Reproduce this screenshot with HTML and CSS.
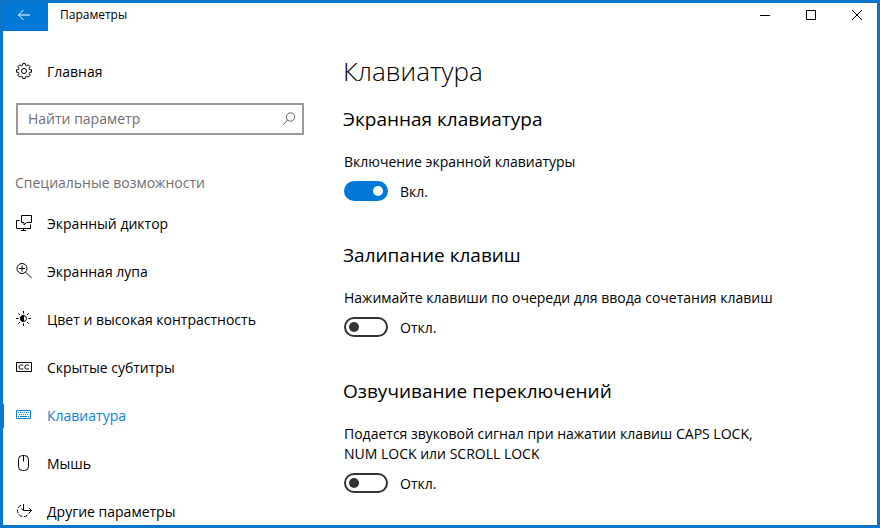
FILE: index.html
```html
<!DOCTYPE html>
<html lang="ru">
<head>
  <meta charset="UTF-8">
  <title>Параметры</title>
  <meta name="viewport" content="width=device-width, initial-scale=1.0">
  <link rel="stylesheet" href="styles.css">
</head>
<body>
  <div class="window">
    <header class="titlebar">
      <button class="back-btn" aria-label="Назад">
        <svg width="14" height="12" viewBox="0 0 14 12"><path d="M13 6H1.500M6.500 1L1.500 6l5 5"/></svg>
      </button>
      <div class="window-title">Параметры</div>
      <button class="window-btn" aria-label="Свернуть">
        <svg width="12" height="12" viewBox="0 0 12 12"><path d="M1 6.500h10"/></svg>
      </button>
      <button class="window-btn" aria-label="Развернуть">
        <svg width="12" height="12" viewBox="0 0 12 12"><path d="M1.500 1.500h9v9h-9z"/></svg>
      </button>
      <button class="window-btn" aria-label="Закрыть">
        <svg width="12" height="12" viewBox="0 0 12 12"><path d="M1 1l10 10M11 1L1 11"/></svg>
      </button>
    </header>
    <div class="content">
      <aside class="sidebar">
        <a href="#" class="nav-item">
          <svg class="icon" viewBox="0 0 16 16"><circle cx="8" cy="8" r="2.500"/><path d="M6.500 2.300L6.800.5h2.400l.3 1.800 1.200.5L12.200 1.800l2 2-1.100 1.500.5 1.200 1.900.3v2.400l-1.900.3-.5 1.200 1.100 1.500-2 2-1.500-1.100-1.200.5-.3 1.900H6.800l-.3-1.900-1.200-.5-1.500 1.100-2-2 1.100-1.500-.5-1.200-1.900-.3V6.800l1.900-.3.5-1.200-1.100-1.500 2-2 1.500 1z"/></svg>
          Главная
        </a>
        <div class="search">
          <input type="text" class="search-input" placeholder="Найти параметр" aria-label="Найти параметр">
          <svg class="search-icon" width="14" height="14" viewBox="0 0 14 14"><circle cx="8.500" cy="5" r="4.200"/><path d="M5.500 8L1 13"/></svg>
        </div>
        <div class="section-name">Специальные возможности</div>
        <nav>
          <a href="#" class="nav-item">
            <svg class="icon" viewBox="0 0 16 16"><path d="M5.500.5h10v7h-5l-2.500 2.500v-2.500H5.500zM3.500 5.500h-3v8h14v-4M7.500 13.500v2M5 15.500h5"/></svg>
            Экранный диктор
          </a>
          <a href="#" class="nav-item">
            <svg class="icon" viewBox="0 0 16 16"><circle cx="6" cy="5.500" r="5"/><path d="M3 5.500h6M6 2.500v6M9.600 9.100l6 6"/></svg>
            Экранная лупа
          </a>
          <a href="#" class="nav-item">
            <svg class="icon" viewBox="0 0 16 16"><circle cx="7.500" cy="7.500" r="3"/><path class="fill" d="M7.500 4.500a3 3 0 0 0 0 6z"/><path d="M7.500 0v2.500M7.500 12.500V15M0 7.500h2.500M12.500 7.500H15M2.300 2.300L4 4M11 11l1.700 1.700M2.300 12.700L4 11M11 4l1.700-1.700"/></svg>
            Цвет и высокая контрастность
          </a>
          <a href="#" class="nav-item">
            <svg class="icon" viewBox="0 0 16 16"><path d="M.5 3.500h15v9H.5zM7.200 6.400C5.500 5.300 3 5.700 3 8s2.500 2.700 4.200 1.600M13 6.400c-1.700-1.100-4.200-.7-4.200 1.600s2.500 2.700 4.200 1.600"/></svg>
            Скрытые субтитры
          </a>
          <a href="#" class="nav-item active">
            <svg class="icon" viewBox="0 0 16 16"><path d="M.5 3.500h14v8H.5zM4 9.500h7"/><path stroke-dasharray="1 1" d="M2 5.500h11M3 7.500h10M2 9.500h1M12 9.500h1"/></svg>
            Клавиатура
          </a>
          <a href="#" class="nav-item">
            <svg class="icon" viewBox="0 0 16 16"><rect x="2.500" y=".5" width="10" height="15" rx="4"/><path d="M7.500 1v5.500"/></svg>
            Мышь
          </a>
          <a href="#" class="nav-item">
            <svg class="icon" viewBox="0 0 16 16"><path stroke-dasharray="4 1.500" d="M5 2.200A6 6 0 1 0 13 10"/><path d="M7.500 1v6.500h8M5.500 5.500l2 2M13 5l2.500 2.500L13 10"/></svg>
            Другие параметры
          </a>
        </nav>
      </aside>
      <main class="main">
        <h1>Клавиатура</h1>
        <section class="setting">
          <h2>Экранная клавиатура</h2>
          <label class="setting-label" for="screenKeyboard">Включение экранной клавиатуры</label>
          <div class="toggle-row">
            <input type="checkbox" class="toggle" id="screenKeyboard" checked>
            <span>Вкл.</span>
          </div>
        </section>
        <section class="setting">
          <h2>Залипание клавиш</h2>
          <label class="setting-label" for="stickyKeys">Нажимайте клавиши по очереди для ввода сочетания клавиш</label>
          <div class="toggle-row">
            <input type="checkbox" class="toggle" id="stickyKeys">
            <span>Откл.</span>
          </div>
        </section>
        <section class="setting">
          <h2>Озвучивание переключений</h2>
          <label class="setting-label" for="toggleKeys">Подается звуковой сигнал при нажатии клавиш CAPS LOCK, NUM LOCK или SCROLL LOCK</label>
          <div class="toggle-row">
            <input type="checkbox" class="toggle" id="toggleKeys">
            <span>Откл.</span>
          </div>
        </section>
      </main>
    </div>
  </div>
</body>
</html>
```
FILE: styles.css
```css
* {
  box-sizing: border-box;
}
body {
  margin: 0;
  font-family: 'Segoe UI', 'Open Sans', 'Noto Sans', sans-serif;
  font-size: 14px;
  line-height: 20px;
  color: #000;
}
.window {
  height: 100vh;
  display: flex;
  flex-direction: column;
  background: #fff;
  border: 3px solid #0a75c9;
  overflow: hidden;
}
.titlebar {
  display: flex;
  height: 28px;
  flex-shrink: 0;
}
svg {
  fill: none;
  stroke: currentColor;
}
.back-btn, .window-btn {
  display: flex;
  align-items: center;
  justify-content: center;
  padding: 0;
  border: none;
  background: none;
  color: #000;
}
.back-btn {
  width: 45px;
  padding: 0 4px 4px 0;
  background: #0078d7;
  color: #fff;
}
.window-btn {
  width: 46px;
  padding: 0 0 4px 6px;
}
.window-title {
  flex: 1;
  padding-left: 12px;
  font-size: 12px;
  line-height: 24px;
}
.content {
  flex: 1;
  display: flex;
  min-height: 0;
}
.sidebar {
  width: 301px;
  flex-shrink: 0;
  padding-top: 17px;
}
.nav-item {
  position: relative;
  display: flex;
  align-items: center;
  gap: 15px;
  height: 48px;
  padding-left: 13px;
  color: #000;
  text-decoration: none;
}
.icon {
  width: 16px;
  height: 16px;
  margin-bottom: 2px;
}
.fill {
  fill: currentColor;
}
.nav-item.active {
  color: #0a84d0;
}
.nav-item.active::before {
  content: "";
  position: absolute;
  left: 0;
  width: 1px;
  height: 24px;
  background: #0078d7;
}
.search {
  display: flex;
  align-items: center;
  height: 32px;
  margin: 7px 0 0 13px;
  padding: 0 6px 0 10px;
  border: 2px solid #999;
  color: #666;
}
.search-input {
  flex: 1;
  min-width: 0;
  padding: 0;
  border: none;
  outline: none;
  font: inherit;
}
.search-input::placeholder {
  color: #707070;
  opacity: 1;
}
.section-name {
  margin: 38px 0 7px;
  padding-left: 12px;
  color: #707070;
}
.main {
  flex: 1;
  padding: 20px 20px 0 39px;
}
h1, h2 {
  margin: 0;
  font-weight: 400;
}
h1 {
  font-size: 26px;
  font-weight: 300;
  line-height: 40px;
}
h2 {
  font-size: 19px;
  line-height: 24px;
  margin-bottom: 21px;
}
.setting {
  margin-top: 16px;
  margin-bottom: 40px;
}
.setting-label {
  display: block;
  max-width: 440px;
  padding-left: 1px;
}
.toggle-row {
  display: flex;
  align-items: flex-start;
  gap: 12px;
  margin-top: 9px;
  padding-left: 1px;
  line-height: 22px;
}
.toggle {
  appearance: none;
  display: flex;
  align-items: center;
  width: 44px;
  height: 20px;
  margin: 0;
  padding: 0 3px;
  border: 2px solid #333;
  border-radius: 10px;
}
.toggle::before {
  content: "";
  width: 10px;
  height: 10px;
  border-radius: 50%;
  background: #333;
}
.toggle:checked {
  justify-content: flex-end;
  border-color: #0078d7;
  background: #0078d7;
}
.toggle:checked::before {
  background: #fff;
}
```
